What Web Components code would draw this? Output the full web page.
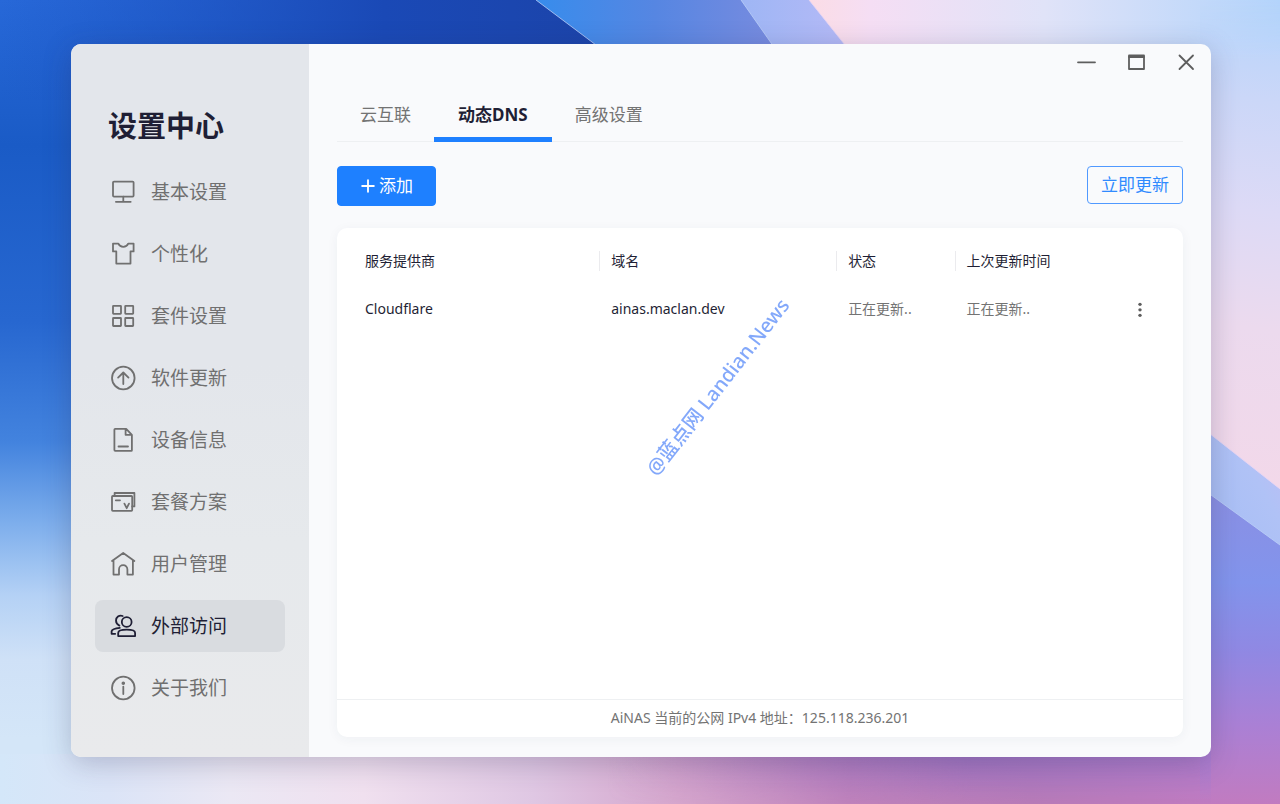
<!DOCTYPE html>
<html lang="zh-CN">
<head>
<meta charset="utf-8">
<meta name="viewport" content="width=device-width, initial-scale=1">
<title>设置中心</title>
<style>
  :root {
    --ink: #1f1f35;
    --muted: #737373;
    --accent: #1e80ff;
    --line: #eef0f2;
  }
  html, body { margin: 0; }
  body {
    font-family: "Noto Sans", "Noto Sans CJK SC", sans-serif;
    color: var(--ink);
    background: #cfe0f6;
  }
</style>
</head>
<body>
<nas-desktop>
  <nas-window>
    <nas-sidebar slot="sidebar" heading="设置中心">
      <nas-nav-item icon="monitor">基本设置</nas-nav-item>
      <nas-nav-item icon="shirt">个性化</nas-nav-item>
      <nas-nav-item icon="grid">套件设置</nas-nav-item>
      <nas-nav-item icon="update">软件更新</nas-nav-item>
      <nas-nav-item icon="file">设备信息</nas-nav-item>
      <nas-nav-item icon="plan">套餐方案</nas-nav-item>
      <nas-nav-item icon="home">用户管理</nas-nav-item>
      <nas-nav-item icon="users" active>外部访问</nas-nav-item>
      <nas-nav-item icon="info">关于我们</nas-nav-item>
    </nas-sidebar>
    <nas-tabs>
      <nas-tab>云互联</nas-tab>
      <nas-tab active>动态DNS</nas-tab>
      <nas-tab>高级设置</nas-tab>
    </nas-tabs>
    <nas-toolbar>
      <nas-button kind="primary" icon="plus">添加</nas-button>
      <nas-button kind="outline">立即更新</nas-button>
    </nas-toolbar>
    <nas-card>
      <nas-ddns-table></nas-ddns-table>
      <span slot="watermark">@蓝点网 Landian.News</span>
      <span slot="footer">AiNAS 当前的公网 IPv4 地址：125.118.236.201</span>
    </nas-card>
  </nas-window>
</nas-desktop>

<script>
const ICONS = {
  monitor: '<rect x="3" y="2.600" width="20.600" height="15" rx="1"/><path d="M13.300 17.600v5M5.900 22.800h14.800"/>',
  shirt: '<path d="M3 2.600h5.400c1 2.200 2.700 3.300 4.900 3.300s3.900-1.100 4.900-3.300h5.400v7.800h-3.100v12.200H6.300V10.400H3z"/>',
  grid: '<rect x="3" y="2.800" width="8" height="8" rx=".5"/><rect x="15.200" y="2.800" width="8" height="8" rx=".5"/><rect x="3" y="15" width="8" height="8" rx=".5"/><rect x="15.200" y="15" width="8" height="8" rx=".5"/>',
  update: '<circle cx="13.300" cy="13" r="11.300"/><path d="M13.300 19V7.600M8.100 12.600 13.300 7.500l5.200 5.100"/>',
  file: '<path d="M5.200 1.800h11l5.700 6v15.400q0 .7-.7.700H5.200q-.8 0-.8-.8V2.600q0-.8.800-.8zM15.600 2v5.800h6.100M8.500 19.500H18"/>',
  plan: '<rect x="2" y="7" width="20.200" height="14.800" rx=".8"/><path d="M4.600 6.600V4h19.800v13.400h-2.200M5.800 11.300H10M14.400 14.600l2.300 4.600 2.300-4.600"/>',
  home: '<path d="M2 10 13.200 2l11.200 8M3.500 9.200V23.600H9v-5.200a4.200 4.200 0 0 1 8.400 0v5.200h5.500V9.200"/>',
  users: '<circle cx="16.700" cy="9" r="4.900"/><path d="M12.700 3C9 1.800 6 4.200 6 7.600c0 2.300 1.200 4 3.400 5M9.800 14.900c-4.300.4-7.800 1.700-8.200 3.400v2.500h3.600M8.200 23.100v-3.200c0-1.900 3.600-3.200 8.500-3.200s8.400 1.300 8.400 3.200v3.200z"/>',
  info: '<circle cx="13.300" cy="13" r="11.300"/><path d="M13.300 11.700v7.400"/><circle cx="13.300" cy="8.200" r=".9" fill="currentColor"/>',
  plus: '<path d="M13 3.500v19M3.500 13h19"/>',
  minimize: '<path d="M5 13.300h17"/>',
  maximize: '<rect x="6" y="6.500" width="15" height="13.500"/><path d="M6 8h15"/>',
  close: '<path d="m6.500 6.500 13.500 13.500M20 6.500 6.500 20"/>',
  more: '<g fill="currentColor" stroke="none"><circle cx="13" cy="7.500" r="2"/><circle cx="13" cy="14" r="2"/><circle cx="13" cy="20.500" r="2"/></g>'
};

function define(name, render) {
  customElements.define(name, class extends HTMLElement {
    constructor() {
      super();
      this.attachShadow({ mode: 'open' });
    }
    connectedCallback() {
      const template = document.createElement('template');
      template.innerHTML = render(this);
      this.shadowRoot.replaceChildren(template.content.cloneNode(true));
    }
  });
}

define('nas-icon', el => `
  <style>
    :host { display: block; flex: none; width: 26px; height: 26px; }
    svg { display: block; width: 100%; height: 100%; fill: none; stroke: currentColor; stroke-width: var(--stroke, 1.8); stroke-linejoin: round; stroke-linecap: round; }
  </style>
  <svg viewBox="0 0 26 26" aria-hidden="true">${ICONS[el.getAttribute('name')]}</svg>`);

define('nas-desktop', () => `
  <style>
    :host { display: flex; position: relative; box-sizing: border-box; min-height: 100vh; padding: 44px 69px 47px 71px; }
    .wallpaper { position: absolute; inset: 0; width: 100%; height: 100%; }
    slot { display: flex; flex: 1; position: relative; }
  </style>
  <svg class="wallpaper" viewBox="0 0 1280 804" preserveAspectRatio="none" aria-hidden="true">
    <defs>
      <linearGradient id="sky" x1="0" y1="0" x2="0" y2="1">
        <stop offset="0" stop-color="#2768d8"/><stop offset=".18" stop-color="#1a5bc6"/>
        <stop offset=".4" stop-color="#2767d0"/><stop offset=".55" stop-color="#4383de"/>
        <stop offset=".65" stop-color="#7daeec"/><stop offset=".74" stop-color="#b4d1f5"/>
        <stop offset=".82" stop-color="#cfe1f7"/><stop offset=".92" stop-color="#d4e6f8"/>
      </linearGradient>
      <linearGradient id="deep"><stop offset="0" stop-color="#1b4fbf" stop-opacity="0"/><stop offset=".6" stop-color="#1a49b6"/><stop offset="1" stop-color="#1c43a8"/></linearGradient>
      <linearGradient id="azure" gradientUnits="userSpaceOnUse" x1="540" y1="0" x2="770" y2="0"><stop offset="0" stop-color="#388cec"/><stop offset=".5" stop-color="#5686e2"/><stop offset="1" stop-color="#778bdf"/></linearGradient>
      <linearGradient id="lilac" gradientUnits="userSpaceOnUse" x1="741" y1="0" x2="840" y2="0"><stop offset="0" stop-color="#9eb6f5"/><stop offset="1" stop-color="#b3b9f6"/></linearGradient>
      <linearGradient id="blush"><stop offset="0" stop-color="#fbdce5"/><stop offset=".13" stop-color="#f5def4"/><stop offset=".5" stop-color="#e0e3f8"/><stop offset="1" stop-color="#b4d4fb"/></linearGradient>
      <linearGradient id="right" gradientUnits="userSpaceOnUse" x1="1270" y1="0" x2="1210" y2="500"><stop offset="0" stop-color="#b5d4fb"/><stop offset=".2" stop-color="#cbd7f8"/><stop offset=".42" stop-color="#dddaf6"/><stop offset=".65" stop-color="#ecdaee"/><stop offset="1" stop-color="#f3d8e9"/></linearGradient>
      <linearGradient id="softTop" gradientUnits="userSpaceOnUse" x1="0" y1="0" x2="0" y2="60"><stop offset="0" stop-color="#000"/><stop offset="1" stop-color="#fff"/></linearGradient>
      <mask id="softMask" maskUnits="userSpaceOnUse" x="1200" y="0" width="80" height="500"><rect x="1200" width="80" height="500" fill="url(#softTop)"/></mask>
      <linearGradient id="ribbon" x1="1" y1="0" x2="0" y2="1"><stop offset="0" stop-color="#bfbdf5"/><stop offset=".35" stop-color="#b0c2f6"/><stop offset="1" stop-color="#a4bdf4"/></linearGradient>
      <linearGradient id="violet" x1="0" y1="0" x2="0" y2="1"><stop offset="0" stop-color="#8b8fe3"/><stop offset=".3" stop-color="#8294ec"/><stop offset=".52" stop-color="#9088e3"/><stop offset=".75" stop-color="#aa80d5"/><stop offset="1" stop-color="#c17bc0"/></linearGradient>
      <linearGradient id="floor"><stop offset="0" stop-color="#d4e7f9"/><stop offset=".09" stop-color="#dbe4f7"/><stop offset=".19" stop-color="#ebe8f4"/><stop offset=".3" stop-color="#f0e0ef"/><stop offset=".44" stop-color="#dfc7e3"/><stop offset=".56" stop-color="#d5a5cc"/><stop offset=".7" stop-color="#bf82bb"/><stop offset=".85" stop-color="#b87bb7"/><stop offset="1" stop-color="#c17bc0"/></linearGradient>
      <linearGradient id="dusk"><stop offset=".5" stop-color="#9c75c5" stop-opacity="0"/><stop offset=".8" stop-color="#9871c5"/><stop offset="1" stop-color="#a97cd0"/></linearGradient>
      <linearGradient id="fade" x1="0" y1="0" x2="0" y2="1"><stop offset="0" stop-color="#fff"/><stop offset="1" stop-color="#000"/></linearGradient>
      <mask id="fadeMask"><rect x="0" y="744" width="1280" height="60" fill="url(#fade)"/></mask>
    </defs>
    <rect width="1280" height="804" fill="url(#sky)"/>
    <rect width="640" height="100" fill="url(#deep)"/>
    <path d="M0 754H1212V804H0z" fill="url(#floor)"/>
    <path d="M536 0H780V60H616z" fill="url(#azure)"/>
    <path d="M741 0H860V60H783z" fill="url(#lilac)"/>
    <path d="M809 0H1280V60H857z" fill="url(#blush)"/>
    <rect x="1200" width="80" height="500" fill="url(#right)" mask="url(#softMask)"/>
    <path d="M1200 426 1280 489V560L1200 500z" fill="url(#ribbon)"/>
    <path d="M1200 487 1280 545V804H1200z" fill="url(#violet)"/>
    <rect y="744" width="1211" height="60" fill="url(#dusk)" mask="url(#fadeMask)"/>
    <path d="M536 0 616 60M741 0 783 60M1200 487 1280 545" fill="none" stroke="#bcd0f8" stroke-opacity=".8"/>
    <path d="M809 0 857 60M1200 426 1280 489" fill="none" stroke="#e6d5f5" stroke-opacity=".8"/>
  </svg>
  <slot></slot>`);

define('nas-window', () => `
  <style>
    :host { display: flex; flex: 1; min-width: 0; border-radius: 10px; overflow: hidden; background: #f9fafc; box-shadow: 0 6px 28px rgba(50, 50, 90, .26); }
    main { display: flex; flex-direction: column; flex: 1; min-width: 0; }
    .controls { display: flex; justify-content: flex-end; height: 36px; }
    .controls button { display: grid; place-items: center; width: 50px; padding: 0; border: 0; background: none; color: #5e5e5e; }
    .body { display: flex; flex-direction: column; flex: 1; padding: 7px 28px 20px; }
  </style>
  <slot name="sidebar"></slot>
  <main>
    <div class="controls">
      <button type="button" aria-label="最小化"><nas-icon name="minimize"></nas-icon></button>
      <button type="button" aria-label="最大化"><nas-icon name="maximize"></nas-icon></button>
      <button type="button" aria-label="关闭"><nas-icon name="close"></nas-icon></button>
    </div>
    <div class="body"><slot></slot></div>
  </main>`);

define('nas-sidebar', el => `
  <style>
    :host { display: block; flex: none; box-sizing: border-box; width: 238px; padding: 62px 24px 40px; background: linear-gradient(#e3e6eb 45%, #e6e9ec 70%, #e9eaec); }
    h1 { margin: 0 0 20px; padding-left: 13px; font-size: 29px; line-height: 40px; font-weight: 700; }
    nav { display: flex; flex-direction: column; gap: 10px; }
  </style>
  <h1>${el.getAttribute('heading')}</h1>
  <nav><slot></slot></nav>`);

define('nas-nav-item', el => `
  <style>
    :host { display: block; }
    a { display: flex; align-items: center; gap: 15px; height: 52px; padding: 0 15px; border-radius: 8px; font-size: 19px; line-height: 28px; color: #707070; text-decoration: none; }
    :host([active]) a { color: var(--ink); background: #d9dce0; }
  </style>
  <a href="#${el.getAttribute('icon')}" ${el.hasAttribute('active') ? 'aria-current="page"' : ''}>
    <nas-icon name="${el.getAttribute('icon')}"></nas-icon><span><slot></slot></span>
  </a>`);

define('nas-tabs', () => `
  <style>
    :host { display: flex; height: 54px; border-bottom: 1px solid var(--line); }
  </style>
  <slot></slot>`);

define('nas-tab', el => `
  <style>
    :host { display: flex; }
    button { box-sizing: border-box; height: 55px; padding: 5px 23px 0; border: 0; border-bottom: 5px solid transparent; background: none; font: inherit; font-size: 17px; line-height: 24px; color: var(--muted); }
    :host([active]) button { padding: 5px 24px 0; border-color: var(--accent); color: var(--ink); font-weight: 700; }
  </style>
  <button type="button" role="tab" aria-selected="${el.hasAttribute('active')}"><slot></slot></button>`);

define('nas-toolbar', () => `
  <style>
    :host { display: flex; justify-content: space-between; align-items: flex-start; height: 40px; margin: 24px 0 22px; }
  </style>
  <slot></slot>`);

define('nas-button', el => `
  <style>
    :host { display: block; }
    button { display: flex; align-items: center; gap: 3px; box-sizing: border-box; border: 1px solid var(--accent); border-radius: 4px; font: inherit; font-size: 17px; line-height: 24px; }
    :host([kind="primary"]) button { height: 40px; padding: 0 22px; background: var(--accent); color: #fff; }
    :host([kind="outline"]) button { height: 38px; padding: 0 13px; background: none; border-color: #5099ff; color: #308aff; }
    nas-icon { width: 16px; height: 16px; --stroke: 3; }
  </style>
  <button type="button">${el.hasAttribute('icon') ? `<nas-icon name="${el.getAttribute('icon')}"></nas-icon>` : ''}<span><slot></slot></span></button>`);

define('nas-card', () => `
  <style>
    :host { display: flex; flex-direction: column; flex: 1; position: relative; border-radius: 10px; background: #fff; box-shadow: 0 2px 12px rgba(40, 50, 80, .05); }
    .content { flex: 1; padding-top: 9px; }
    .mark { position: absolute; left: 50%; top: 159px; font-size: 20px; line-height: 28px; white-space: nowrap; color: #4a80f8; opacity: .68; transform: translate(-50%, -50%) translateX(-42px) rotate(-52deg); pointer-events: none; font-weight: 500; }
    footer { padding: 6px 0 7px; border-top: 1px solid var(--line); text-align: center; font-size: 14px; line-height: 24px; color: var(--muted); }
  </style>
  <div class="content"><slot></slot></div>
  <div class="mark"><slot name="watermark"></slot></div>
  <footer><slot name="footer"></slot></footer>`);

define('nas-ddns-table', () => `
  <style>
    :host { display: block; }
    table { width: 100%; table-layout: fixed; border-collapse: collapse; font-size: 14px; line-height: 20px; color: var(--ink); }
    .provider { width: 31%; } .domain { width: 28%; } .state { width: 14%; } .action { width: 86px; }
    th, td { height: 48px; padding: 0; text-align: left; font-weight: 400; }
    th:first-child, td:first-child { padding-left: 28px; }
    td:not(:first-child) { padding-left: 12px; }
    th.split span { display: block; padding-left: 11px; border-left: 1px solid #ebebee; }
    td.pending { color: var(--muted); }
    td.menu { padding: 0; }
    td button { display: block; margin: 0 auto; padding: 0; border: 0; background: none; color: #5e5e5e; }
    nas-icon { width: 22px; height: 22px; }
  </style>
  <table>
    <colgroup><col class="provider"><col class="domain"><col class="state"><col><col class="action"></colgroup>
    <thead>
      <tr><th scope="col">服务提供商</th><th scope="col" class="split"><span>域名</span></th><th scope="col" class="split"><span>状态</span></th><th scope="col" class="split"><span>上次更新时间</span></th><th></th></tr>
    </thead>
    <tbody>
      <tr><td>Cloudflare</td><td>ainas.maclan.dev</td><td class="pending">正在更新..</td><td class="pending">正在更新..</td><td class="menu"><button type="button" aria-label="更多操作"><nas-icon name="more"></nas-icon></button></td></tr>
    </tbody>
  </table>`);
</script>
</body>
</html>
